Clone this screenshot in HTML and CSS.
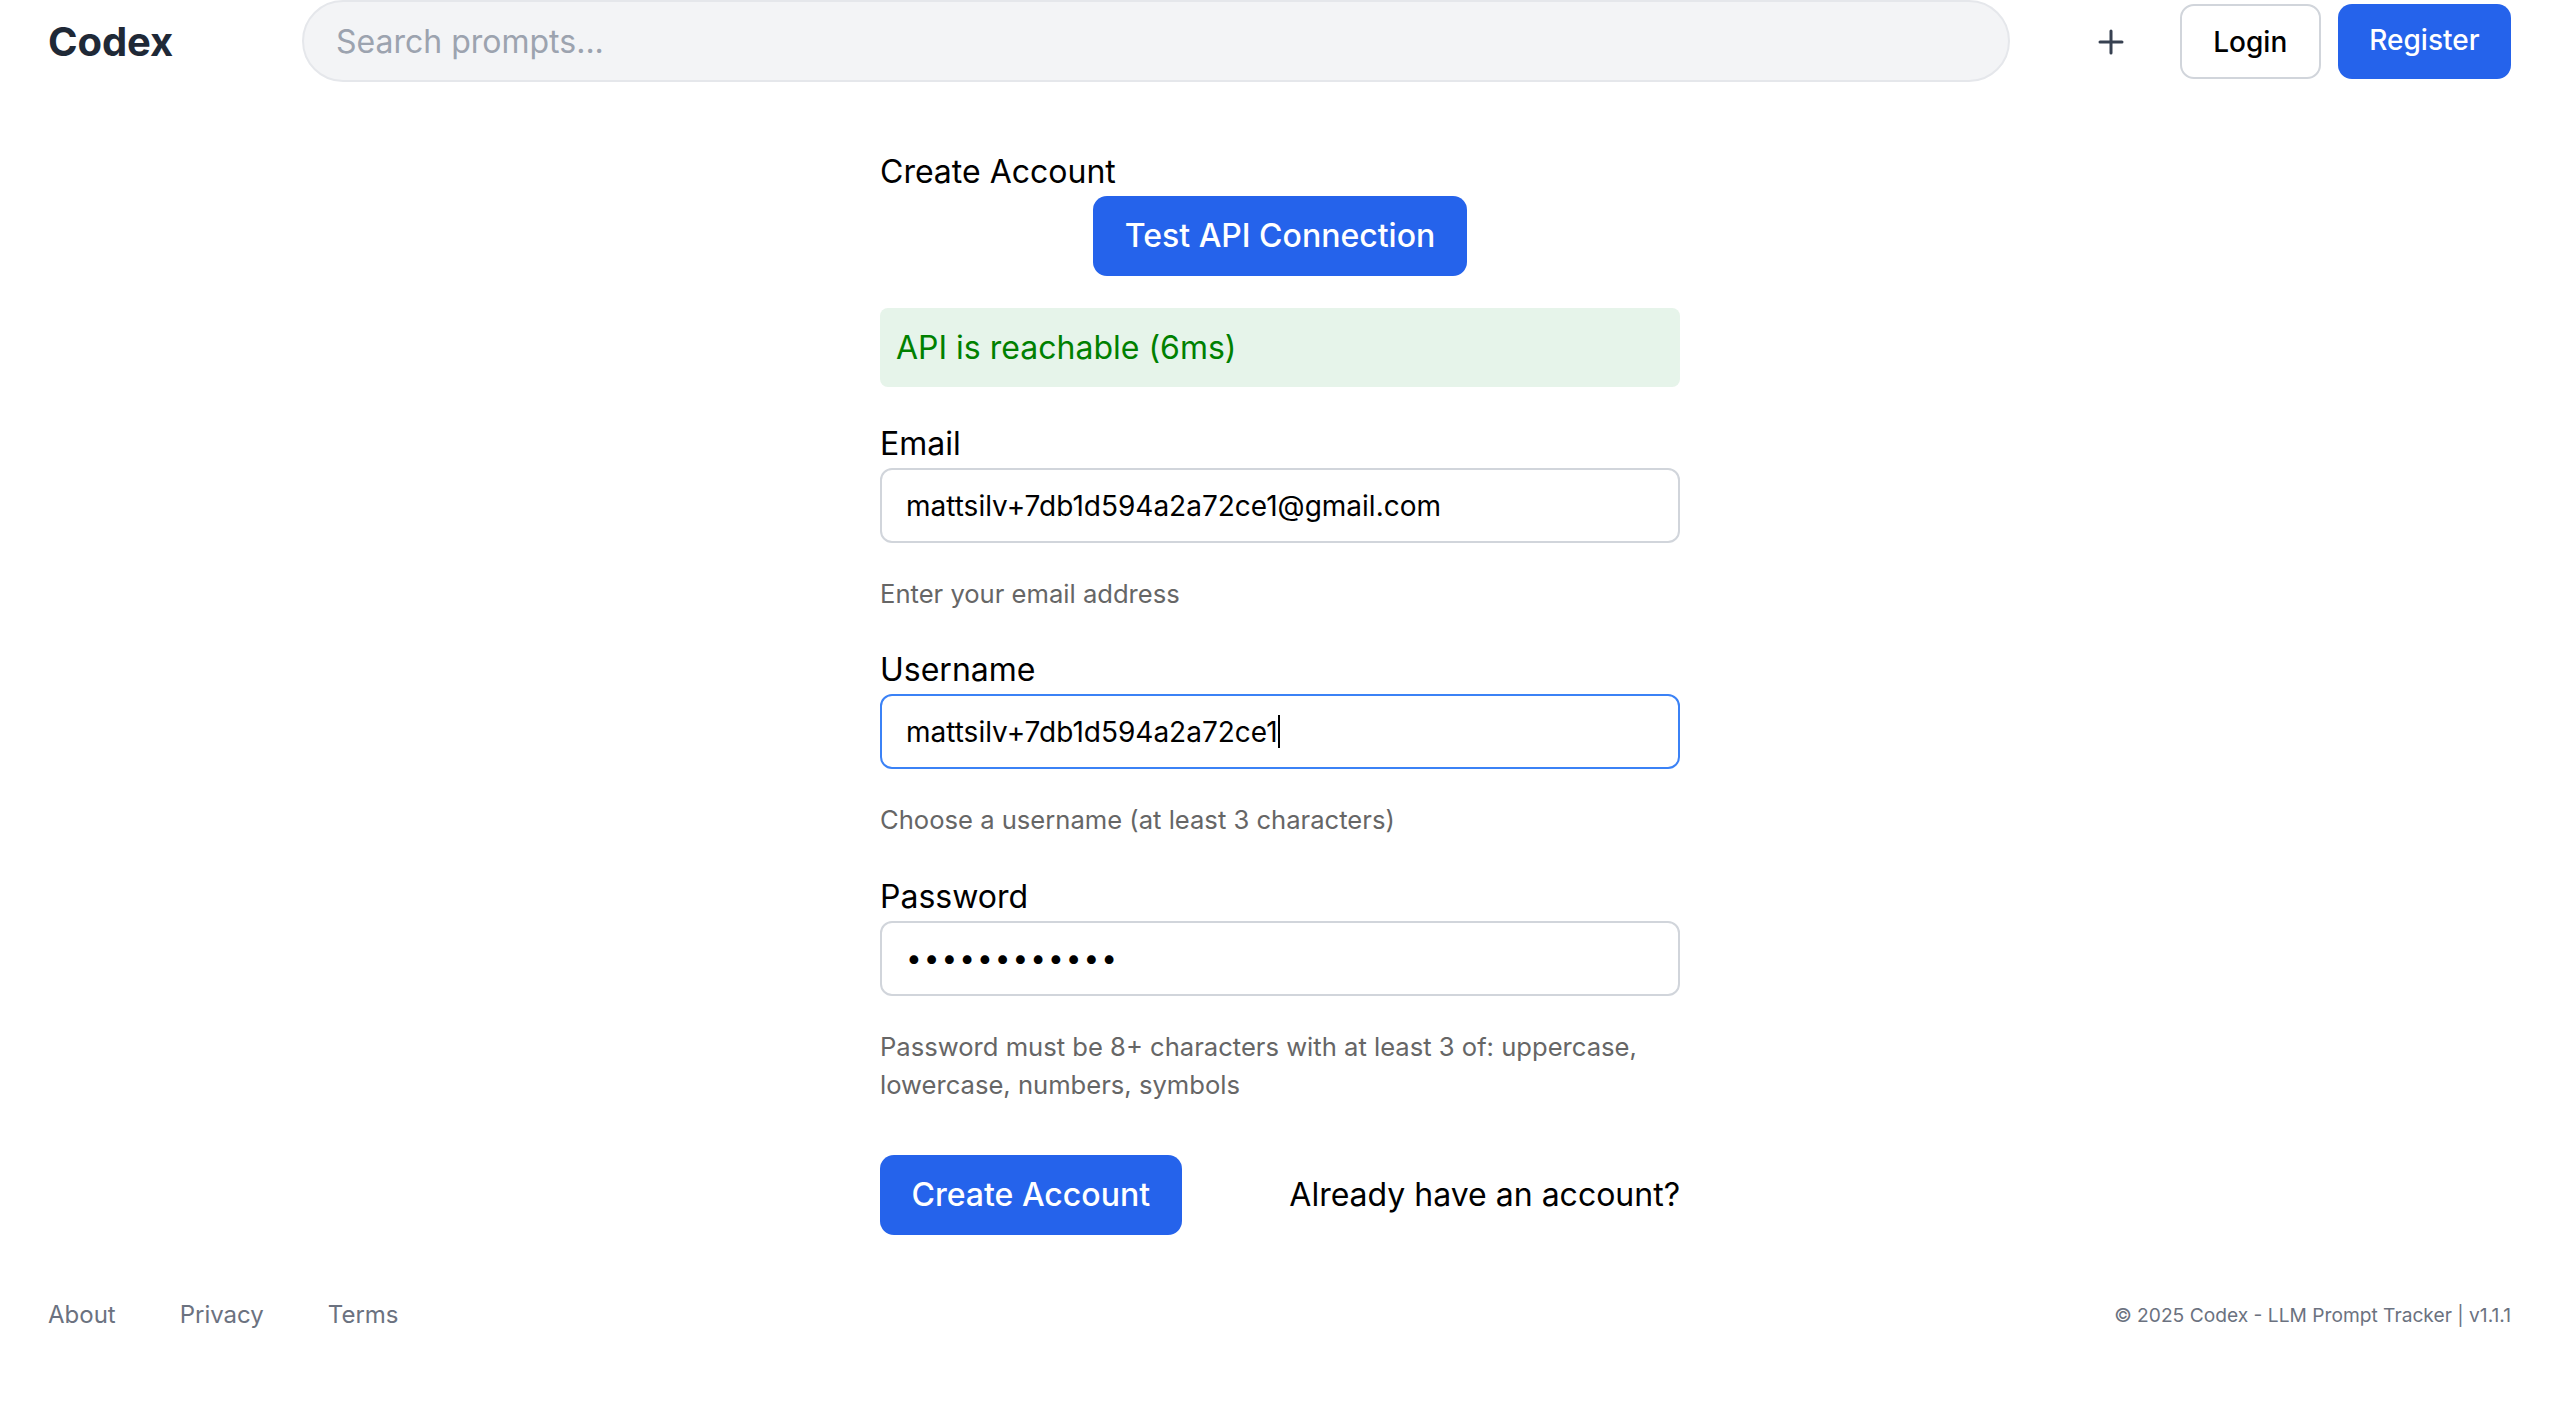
FILE: index.html
```html
<!DOCTYPE html>
<html lang="en">
<head>
<meta charset="utf-8">
<title>Codex - Create Account</title>
<link rel="stylesheet" href="styles.css">
</head>
<body>
<header class="topbar">
  <a class="logo" href="#">Codex</a>
  <div class="search">
    <input class="search-input" type="text" placeholder="Search prompts...">
  </div>
  <div class="actions">
    <button class="icon-btn" aria-label="New prompt">
      <svg width="26" height="26" viewBox="0 0 26 26" fill="none" stroke="#374151" stroke-width="3" stroke-linecap="round"><path d="M13 2v22M2 13h22"/></svg>
    </button>
    <button class="btn-outline">Login</button>
    <button class="btn-primary btn-nav">Register</button>
  </div>
</header>

<main class="main">
  <form class="auth-form" onsubmit="return false">
    <h1 class="form-title">Create Account</h1>
    <button type="button" class="btn-primary btn-test">Test API Connection</button>
    <div class="alert-success">API is reachable (6ms)</div>

    <div class="field">
      <label class="field-label" for="email">Email</label>
      <input class="field-input" id="email" type="email" value="mattsilv+7db1d594a2a72ce1@gmail.com">
      <p class="field-help">Enter your email address</p>
    </div>

    <div class="field">
      <label class="field-label" for="username">Username</label>
      <div class="input-wrap">
        <input class="field-input is-focused" id="username" type="text" value="mattsilv+7db1d594a2a72ce1">
        <span class="caret"></span>
      </div>
      <p class="field-help">Choose a username (at least 3 characters)</p>
    </div>

    <div class="field">
      <label class="field-label" for="password">Password</label>
      <input class="field-input" id="password" type="password" value="abcdefghijkl">
      <p class="field-help">Password must be 8+ characters with at least 3 of: uppercase, lowercase, numbers, symbols</p>
    </div>

    <div class="form-actions">
      <button type="submit" class="btn-primary btn-submit">Create Account</button>
      <a class="link-plain" href="#">Already have an account?</a>
    </div>
  </form>
</main>

<footer class="footer">
  <nav class="footer-links">
    <a href="#">About</a>
    <a href="#">Privacy</a>
    <a href="#">Terms</a>
  </nav>
  <div class="copyright">© 2025 Codex - LLM Prompt Tracker | v1.1.1</div>
</footer>
</body>
</html>
```

FILE: styles.css
```css
* { box-sizing: border-box; }

html, body {
  margin: 0;
  padding: 0;
  background: #ffffff;
  font-family: Inter, "Noto Sans", "DejaVu Sans", sans-serif;
  color: #000;
}

button, input { font-family: inherit; }

.topbar {
  display: flex;
  align-items: center;
  height: 83px;
  padding: 0 49px 0 48px;
}

.logo {
  width: 254px;
  flex: none;
  font-size: 40px;
  font-weight: 700;
  color: #1f2937;
  text-decoration: none;
  letter-spacing: -0.1px;
}

.search {
  flex: 1;
  height: 82px;
  align-self: flex-start;
}

.search-input {
  width: 100%;
  height: 100%;
  border: 2px solid #e5e7eb;
  background: #f3f4f6;
  border-radius: 41px;
  padding: 0 32px;
  font-size: 32px;
  color: #111827;
  outline: none;
}
.search-input::placeholder { color: #9ca3af; }

.actions {
  display: flex;
  align-items: center;
  margin-left: 72px;
  gap: 17px;
}

.icon-btn {
  width: 58px;
  height: 58px;
  border: none;
  background: transparent;
  display: flex;
  align-items: center;
  justify-content: center;
  padding: 0;
  margin-right: 23px;
  cursor: pointer;
}

.btn-outline {
  height: 75px;
  padding: 0 31.5px;
  border: 2px solid #d1d5db;
  background: #fff;
  border-radius: 14px;
  font-size: 28px;
  font-weight: 500;
  color: #000;
}

.btn-primary {
  background: #2563eb;
  color: #fff;
  border: none;
  cursor: pointer;
  font-weight: 500;
}

.btn-nav {
  height: 75px;
  padding: 0 31.5px 3px;
  border-radius: 14px;
  font-size: 28px;
}

.main {
  padding-top: 65px;
}

.auth-form {
  width: 800px;
  margin: 0 auto;
}

.form-title {
  margin: 0;
  font-size: 32px;
  line-height: 48px;
  font-weight: 400;
}

.btn-test {
  display: block;
  margin: 0 auto;
  padding: 16px 32px;
  font-size: 32px;
  line-height: 48px;
  border-radius: 14px;
}

.alert-success {
  margin-top: 32px;
  background: #e6f4ea;
  color: #008000;
  border-radius: 8px;
  padding: 16px 16px 15px;
  font-size: 32px;
  line-height: 48px;
}

.field {
  margin-top: 33px;
}

.field-label {
  display: block;
  font-size: 32px;
  line-height: 48px;
}

.input-wrap {
  position: relative;
}

.caret {
  position: absolute;
  left: 398px;
  top: 21px;
  width: 2px;
  height: 33px;
  background: #000;
}

.field-input {
  display: block;
  width: 100%;
  height: 75px;
  border: 2px solid #d1d5db;
  border-radius: 12px;
  padding: 0 24px;
  font-size: 28px;
  color: #000;
  background: #fff;
  outline: none;
}

.field-input.is-focused,
.field-input:focus {
  border-color: #3b82f6;
}

#password {
  letter-spacing: 2px;
  font-size: 28px;
}

.field-help {
  margin: 32px 0 0;
  font-size: 25.6px;
  line-height: 38.4px;
  color: #666666;
}

.form-actions {
  margin-top: 50px;
  display: flex;
  align-items: center;
  justify-content: space-between;
}

.btn-submit {
  height: 80px;
  padding: 0 31.5px;
  font-size: 32px;
  border-radius: 14px;
}

.link-plain {
  font-size: 32px;
  color: #000;
  text-decoration: none;
}

.footer {
  display: flex;
  align-items: center;
  justify-content: space-between;
  padding: 62px 49px 40px 48px;
}

.footer-links {
  display: flex;
  gap: 64px;
}

.footer-links a {
  font-size: 24px;
  line-height: 36px;
  color: #6b7280;
  text-decoration: none;
}

.copyright {
  font-size: 19.2px;
  color: #6b7280;
}
```
